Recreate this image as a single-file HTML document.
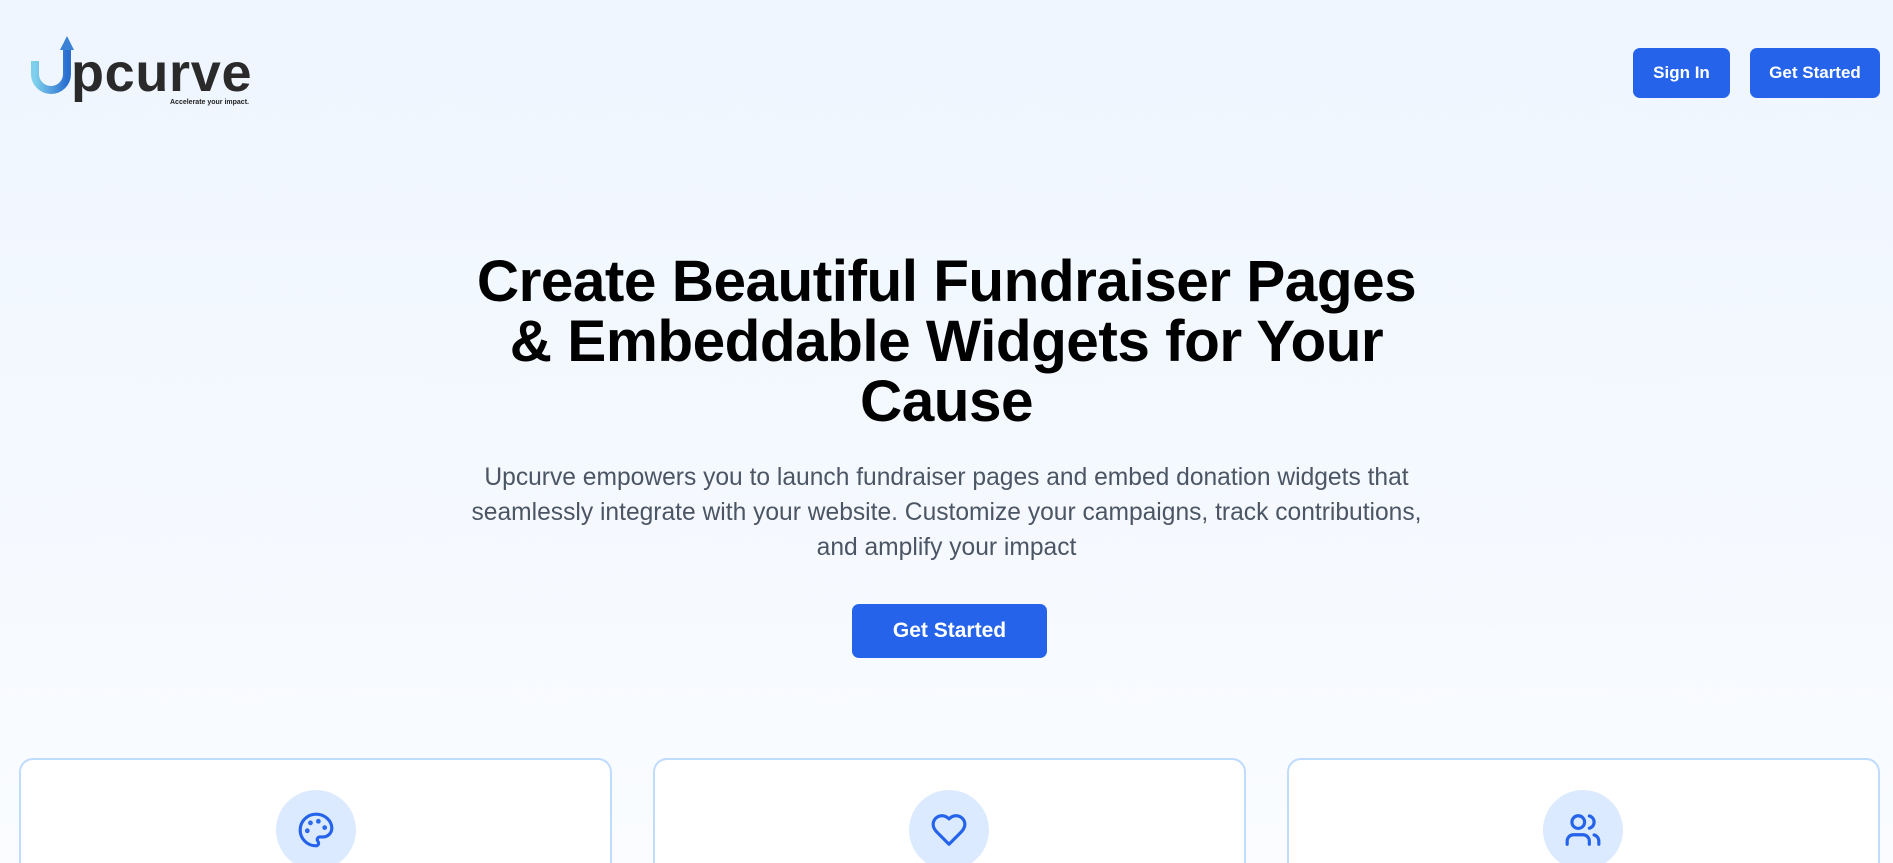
<!DOCTYPE html>
<html><head><meta charset="utf-8"><style>
*{margin:0;padding:0;box-sizing:border-box}
html,body{width:1893px;height:863px;overflow:hidden}
body{font-family:"Liberation Sans",sans-serif;background:linear-gradient(#eff6ff 0%,#f5f9ff 60%,#fafcff 100%);position:relative}
.btn{position:absolute;background:#2563eb;color:#fff;border-radius:7px;font-weight:bold;display:flex;align-items:center;justify-content:center}
h1{position:absolute;left:0;width:1893px;top:252px;text-align:center;font-size:58.5px;line-height:60px;font-weight:bold;color:#000;letter-spacing:-0.5px}
p{position:absolute;left:0;width:1893px;top:460px;text-align:center;font-size:24.6px;line-height:35px;color:#4b5563}
.card{position:absolute;top:758px;width:593px;height:140px;background:#fff;border:2px solid #bfdbfe;border-radius:14px}
.ic{position:absolute;top:790px;width:80px;height:80px;border-radius:50%;background:#dbeafe;display:flex;align-items:center;justify-content:center}
</style></head><body>
<svg style="position:absolute;left:28px;top:34px" width="240" height="75" viewBox="0 0 240 75">
<defs><linearGradient id="g" x1="0" y1="0" x2="1" y2="0"><stop offset="0" stop-color="#7fd0ec"/><stop offset="1" stop-color="#2a6fd0"/></linearGradient></defs>
<path d="M7 27 V40 a16 16 0 0 0 32 0 V14" fill="none" stroke="url(#g)" stroke-width="8"/>
<path d="M32 16 L46 16 L39 2 Z" fill="#3b82d6"/>
<text x="43" y="57" font-family="Liberation Sans" font-weight="bold" font-size="54" fill="#2a2a2a" letter-spacing="-0.5" textLength="180">pcurve</text>
<text x="142" y="70" font-family="Liberation Sans" font-weight="bold" font-size="7" fill="#222">Accelerate your impact.</text>
</svg>
<div class="btn" style="left:1633px;top:48px;width:97px;height:50px;font-size:17px">Sign In</div>
<div class="btn" style="left:1750px;top:48px;width:130px;height:50px;font-size:17px">Get Started</div>
<h1>Create Beautiful Fundraiser Pages<br>&amp; Embeddable Widgets for Your<br>Cause</h1>
<p>Upcurve empowers you to launch fundraiser pages and embed donation widgets that<br>seamlessly integrate with your website. Customize your campaigns, track contributions,<br>and amplify your impact</p>
<div class="btn" style="left:852px;top:604px;width:195px;height:54px;font-size:21px">Get Started</div>
<div class="card" style="left:19px"></div>
<div class="card" style="left:653px"></div>
<div class="card" style="left:1287px"></div>
<div class="ic" style="left:276px"><svg width="38" height="38" viewBox="0 0 24 24" fill="none" stroke="#2563eb" stroke-width="2" stroke-linecap="round" stroke-linejoin="round"><circle cx="13.5" cy="6.5" r=".5" fill="#2563eb"/><circle cx="17.5" cy="10.5" r=".5" fill="#2563eb"/><circle cx="8.5" cy="7.5" r=".5" fill="#2563eb"/><circle cx="6.5" cy="12.5" r=".5" fill="#2563eb"/><path d="M12 2C6.5 2 2 6.5 2 12s4.5 10 10 10c.926 0 1.648-.746 1.648-1.688 0-.437-.18-.835-.437-1.125-.29-.289-.438-.652-.438-1.125a1.640 1.640 0 0 1 1.668-1.668h1.996c3.051 0 5.555-2.503 5.555-5.554C21.965 6.012 17.461 2 12 2z"/></svg></div>
<div class="ic" style="left:909px"><svg width="38" height="38" viewBox="0 0 24 24" fill="none" stroke="#2563eb" stroke-width="2" stroke-linecap="round" stroke-linejoin="round"><path d="M19 14c1.49-1.46 3-3.21 3-5.5A5.5 5.5 0 0 0 16.5 3c-1.760 0-3 .5-4.5 2-1.5-1.5-2.74-2-4.5-2A5.5 5.5 0 0 0 2 8.5c0 2.300 1.500 4.050 3 5.500l7 7Z"/></svg></div>
<div class="ic" style="left:1543px"><svg width="38" height="38" viewBox="0 0 24 24" fill="none" stroke="#2563eb" stroke-width="2" stroke-linecap="round" stroke-linejoin="round"><path d="M16 21v-2a4 4 0 0 0-4-4H6a4 4 0 0 0-4 4v2"/><circle cx="9" cy="7" r="4"/><path d="M22 21v-2a4 4 0 0 0-3-3.870"/><path d="M16 3.130a4 4 0 0 1 0 7.750"/></svg></div>
</body></html>
